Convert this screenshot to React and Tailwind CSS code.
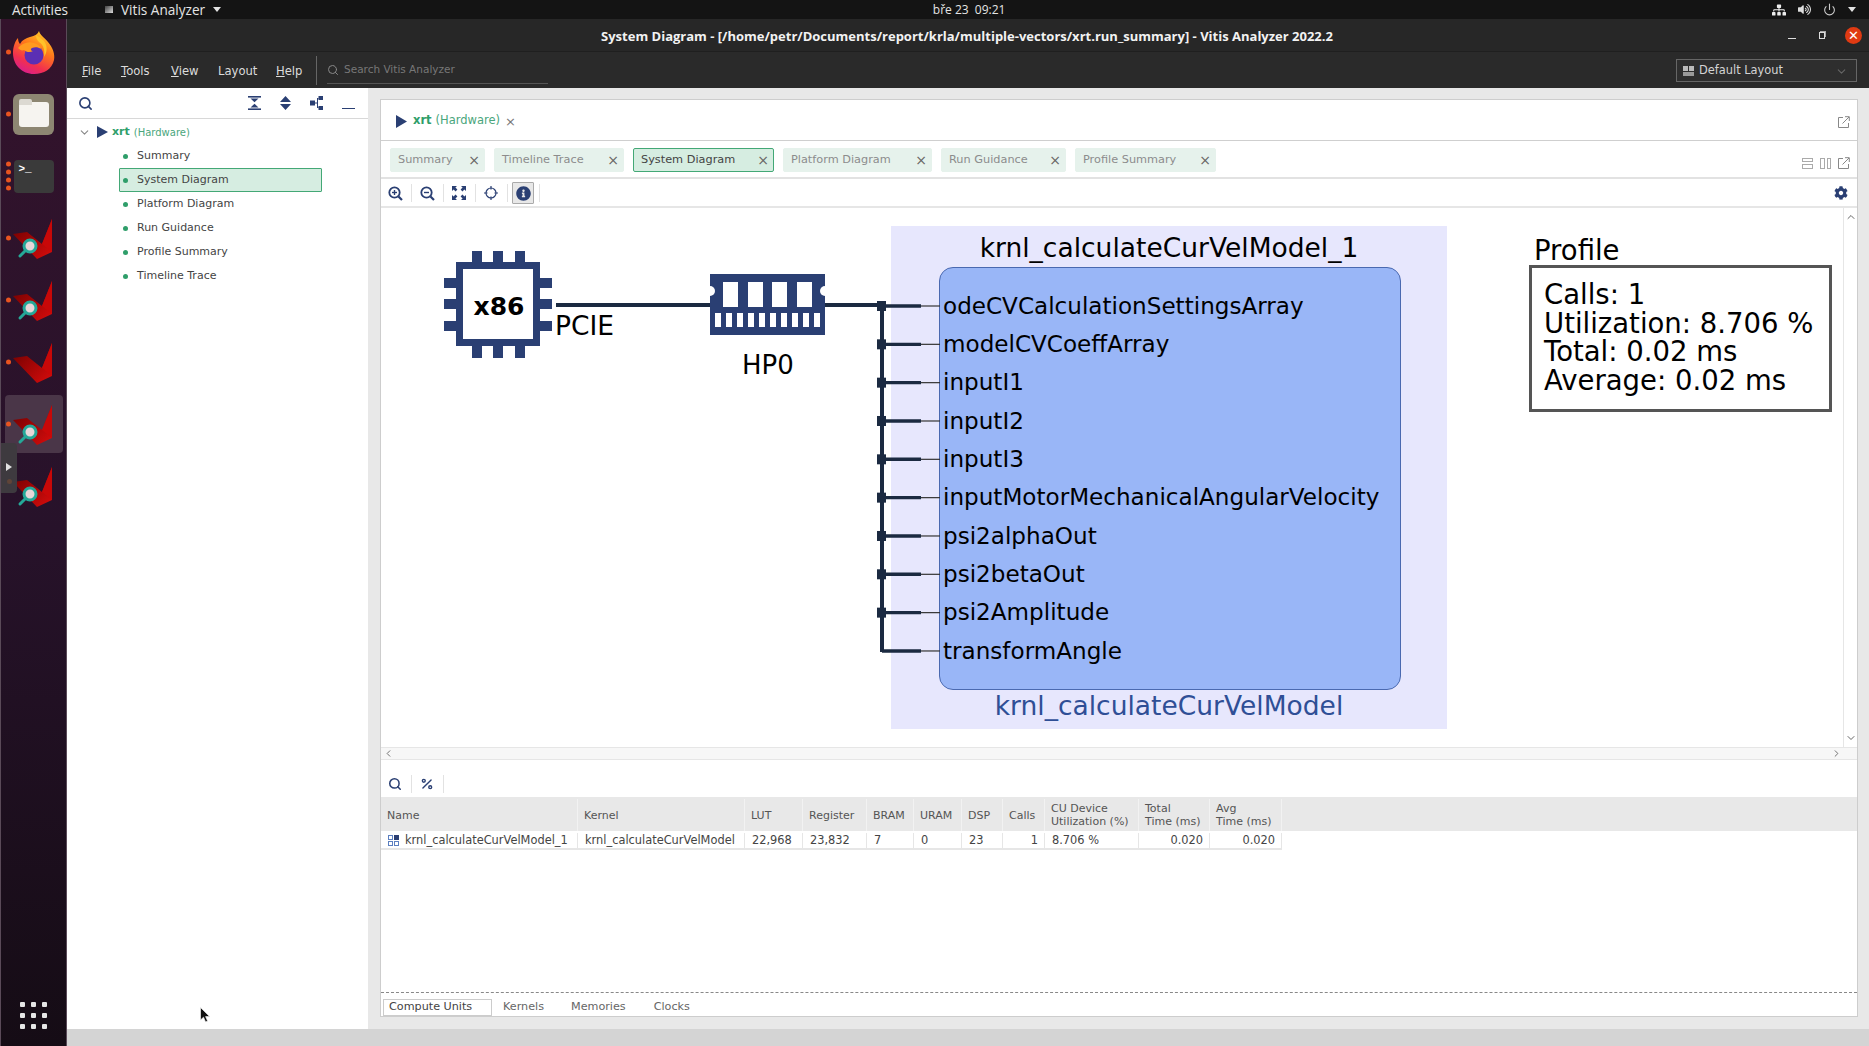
import { ChevronDown, ChevronUp, ChevronLeft, ChevronRight, Search, Power, Percent } from "lucide-react";
import { FaCog, FaInfoCircle, FaSitemap, FaVolumeUp } from "react-icons/fa";

const NAVY = "#2a3f73";

const treeItems = ["Summary", "System Diagram", "Platform Diagram", "Run Guidance", "Profile Summary", "Timeline Trace"];

const tabs = [
  { label: "Summary", w: "w-[95px]" },
  { label: "Timeline Trace", w: "w-[130px]" },
  { label: "System Diagram", w: "w-[141px]", active: true },
  { label: "Platform Diagram", w: "w-[149px]" },
  { label: "Run Guidance", w: "w-[125px]" },
  { label: "Profile Summary", w: "w-[141px]" },
];

const ports = [
  "odeCVCalculationSettingsArray",
  "modelCVCoeffArray",
  "inputI1",
  "inputI2",
  "inputI3",
  "inputMotorMechanicalAngularVelocity",
  "psi2alphaOut",
  "psi2betaOut",
  "psi2Amplitude",
  "transformAngle",
];

const columns = [
  { label: "Name" },
  { label: "Kernel" },
  { label: "LUT" },
  { label: "Register" },
  { label: "BRAM" },
  { label: "URAM" },
  { label: "DSP" },
  { label: "Calls" },
  { label: "CU Device", sub: "Utilization (%)" },
  { label: "Total", sub: "Time (ms)" },
  { label: "Avg", sub: "Time (ms)" },
];

const row = [
  { v: "krnl_calculateCurVelModel_1" },
  { v: "krnl_calculateCurVelModel" },
  { v: "22,968" },
  { v: "23,832" },
  { v: "7" },
  { v: "0" },
  { v: "23" },
  { v: "1", right: true },
  { v: "8.706 %" },
  { v: "0.020", right: true },
  { v: "0.020", right: true },
];

const gridCols = "grid-cols-[197px_167px_58px_64px_47px_48px_41px_42px_94px_71px_72px]";

function Firefox() {
  return (
    <svg width="42" height="43" viewBox="0 0 42 43">
      <defs>
        <linearGradient id="ffA" x1="0.8" y1="0" x2="0.3" y2="1">
          <stop offset="0" stopColor="#ffd02a" />
          <stop offset="0.4" stopColor="#ff7a1a" />
          <stop offset="0.75" stopColor="#f2304e" />
          <stop offset="1" stopColor="#d81e8e" />
        </linearGradient>
      </defs>
      <path d="M26 0c1 4 5 6 9 11 5 6 7 12 6 18-2 9-10 14-20 14C9 43 0 34 0 22 0 16 2 10 5 7c0 3 1 5 2 6 2-4 6-6 10-7 5-1 8-3 9-6z" fill="url(#ffA)" />
      <circle cx="21" cy="24" r="9.5" fill="#5b2fb4" />
      <path d="M5 17c4-5 11-7 16-5 4 1 6 3 7 6-3-2-6-2-9-1-2 1-1 3 1 3-3 2-7 1-9-1-2 1-4 0-6-2z" fill="#ff9a1f" />
      <path d="M26 11c5 3 6 9 5 15 3-4 4-11 0-16-3-3-6-5-8-6 0 3 1 5 3 7z" fill="#ffc22a" />
    </svg>
  );
}

function VitisIcon({ lens = true }) {
  return (
    <svg width="44" height="44" viewBox="0 0 44 44">
      <defs>
        <linearGradient id="vitA" x1="0" y1="0" x2="1" y2="1">
          <stop offset="0" stopColor="#6a0000" />
          <stop offset="1" stopColor="#d80c0c" />
        </linearGradient>
      </defs>
      <path d="M1 18 15 16 30 28 40 3 40 36 25 43Z" fill="url(#vitA)" />
      <path d="M30 28 40 3 40 36Z" fill="#c80808" />
      {lens && (
        <>
          <line x1="8" y1="40" x2="15" y2="33" stroke="#25a898" strokeWidth="3" strokeLinecap="round" />
          <circle cx="18" cy="30" r="6" fill="#e8d6d8" stroke="#25a898" strokeWidth="3" />
        </>
      )}
    </svg>
  );
}

function Dots({ n = 1 }) {
  return (
    <div className="absolute left-[5px] top-1/2 flex -translate-y-1/2 flex-col gap-[3px]">
      {Array.from({ length: n }).map((_, i) => (
        <span key={i} className="block h-[5px] w-[5px] rounded-full bg-[#e95420]" />
      ))}
    </div>
  );
}

function Dock() {
  return (
    <div className="relative flex w-[67px] shrink-0 flex-col border-x border-x-[#5a4a58] bg-gradient-to-b from-[#34132c] via-[#27122a] to-[#150c15] pt-[2px]">
      <div className="relative flex h-[62px] items-center justify-center">
        <Dots />
        <div className="ml-[1px]"><Firefox /></div>
      </div>
      <div className="relative flex h-[62px] items-center justify-center">
        <Dots />
        <div className="flex h-[41px] w-[41px] items-center justify-center rounded-[6px] bg-[#8d8672]">
          <div className="relative h-[25px] w-[30px] rounded-[3px] bg-[#f6f4f0]">
            <div className="absolute -top-[3px] left-0 h-[6px] w-[13px] rounded-t-[2px] bg-[#dcd9d2]" />
          </div>
        </div>
      </div>
      <div className="relative flex h-[62px] items-center justify-center">
        <Dots n={4} />
        <div className="h-[33px] w-[40px] rounded-[4px] bg-[#3a3a3a] px-[5px] pt-[2px] font-['Liberation_Mono',monospace] text-[11px] font-bold leading-[14px] text-white">&gt;_</div>
      </div>
      {[0, 1, 2, 3, 4].map((i) => (
        <div key={i} className="relative flex h-[62px] items-center justify-center">
          {i === 3 && <div className="absolute left-[4px] top-[2px] h-[58px] w-[58px] rounded-[4px] bg-[#4a3648]" />}
          {i !== 4 && <Dots />}
          <div className="relative ml-[1px]"><VitisIcon lens={i !== 2} /></div>
        </div>
      ))}
      {/* handle over the dock */}
      <div className="absolute left-0 top-[424px] flex h-[50px] w-[16px] flex-col items-center rounded-r-[4px] bg-[#3e3a3f] pt-[20px]">
        <span className="block h-0 w-0 border-y-[4px] border-l-[6px] border-y-transparent border-l-[#e0e0e0]" />
        <span className="mt-[8px] block h-[5px] w-[5px] rounded-full bg-[#5f4438]" />
      </div>
      <div className="mb-[17px] mt-auto grid w-[27px] grid-cols-3 gap-[6px] self-center">
        {Array.from({ length: 9 }).map((_, i) => (
          <span key={i} className="block h-[5px] w-[5px] rounded-[1px] bg-[#e6e6e6]" />
        ))}
      </div>
    </div>
  );
}

function TopBar() {
  return (
    <div className="flex h-[19px] shrink-0 items-center bg-[#141414] pl-[12px] font-['Open_Sans',sans-serif] text-[13.6px] leading-[15px] text-[#e4e4e4]">
      <span className="w-[93px]">Activities</span>
      <span className="mr-[8px] h-[7px] w-[8px] bg-gradient-to-br from-[#444] to-[#ddd]" />
      <span>Vitis Analyzer</span>
      <span className="ml-[8px] h-0 w-0 border-x-[4px] border-t-[5px] border-x-transparent border-t-[#e4e4e4]" />
      <span className="ml-[698px] w-[100px] text-center text-[12px]">bře 23&nbsp;&nbsp;09:21</span>
      <div className="ml-auto flex items-center gap-[12px] pr-[13px]">
        <FaSitemap size={14} color="#eee" />
        <FaVolumeUp size={13} color="#ddd" />
        <Power size={13} color="#ccc" />
        <span className="h-0 w-0 border-x-[4px] border-t-[5px] border-x-transparent border-t-[#e4e4e4]" />
      </div>
    </div>
  );
}

function TitleBar() {
  return (
    <div className="relative flex h-[33px] shrink-0 items-center justify-center border-b border-b-[#1f1f1f] bg-[#272727] pt-[3px] font-['Open_Sans',sans-serif] text-[13px] font-bold text-[#f2f2f2]">
      <span className="-ml-[2px]">System Diagram - [/home/petr/Documents/report/krla/multiple-vectors/xrt.run_summary] - Vitis Analyzer 2022.2</span>
      <div className="absolute right-[7px] top-[8px] flex items-center">
        <span className="mt-[6px] h-[1px] w-[8px] bg-[#ddd]" />
        <span className="relative ml-[23px] h-[7px] w-[6px] border border-[#ddd]">
          <span className="absolute -right-[2px] -top-[2px] h-[6px] w-[6px] border-r border-t border-[#aaa]" />
        </span>
        <span className="ml-[20px] flex h-[17px] w-[17px] items-center justify-center rounded-full bg-[#e03a12] text-[13px] font-normal leading-none text-white">✕</span>
      </div>
    </div>
  );
}

function MenuBar() {
  const menus = [
    ["F", "ile", "w-[39px]"],
    ["T", "ools", "w-[50px]"],
    ["V", "iew", "w-[47px]"],
    ["", "Layout", "w-[58px]"],
    ["H", "elp", "w-[40px]"],
  ];
  return (
    <div className="flex h-[36px] shrink-0 items-center bg-[#2a2a2a] pl-[15px] text-[11.6px] text-[#dcdcdc]">
      {menus.map(([u, rest, w]) => (
        <span key={rest} className={`${w} pt-[3px]`}>
          {u && <span className="underline">{u}</span>}
          {rest}
        </span>
      ))}
      <span className="h-[29px] w-[1px] bg-[#666]" />
      <div className="ml-[10px] flex h-[27px] w-[221px] items-center gap-[5px] border-b border-b-[#555] text-[10.5px] text-[#777]">
        <Search size={12} color="#888" />
        <span>Search Vitis Analyzer</span>
      </div>
      <div className="ml-auto mr-[12px] flex h-[23px] w-[181px] items-center border border-[#666] bg-[#2e2e2e] pl-[6px] pr-[8px] pt-[2px] text-[11.4px] text-[#d4d4d4]">
        <span className="mr-[5px] grid h-[10px] w-[11px] grid-cols-2 gap-[1px]">
          <span className="bg-[#bbb]" />
          <span className="bg-[#bbb]" />
          <span className="col-span-2 bg-[#999]" />
        </span>
        Default Layout
        <ChevronDown size={13} color="#666" className="ml-auto" />
      </div>
    </div>
  );
}

function Sep() {
  return <span className="h-[18px] w-[1px] bg-[#e2e2e2]" />;
}

function CollapseIcon() {
  return (
    <svg width="13" height="14" viewBox="0 0 13 14" fill={NAVY}>
      <rect x="0" y="0" width="13" height="1.6" />
      <rect x="0" y="12.4" width="13" height="1.6" />
      <path d="M2.5 2.5h8L6.5 6.3zM2.5 11.5h8L6.5 7.7z" />
    </svg>
  );
}

function ExpandIcon() {
  return (
    <svg width="11" height="14" viewBox="0 0 11 14" fill={NAVY}>
      <path d="M5.5 0 11 6H0zM5.5 14 0 8h11z" />
    </svg>
  );
}

function HierarchyIcon() {
  return (
    <svg width="13" height="14" viewBox="0 0 13 14" fill={NAVY}>
      <rect x="0" y="4.5" width="5" height="5" />
      <rect x="8.5" y="0" width="4.5" height="4" />
      <rect x="8.5" y="10" width="4.5" height="4" />
      <path d="M5 6.5h2V2h1.5v1H8v8h.5v1H7V7.5H5z" />
    </svg>
  );
}

function LeftPanel() {
  return (
    <div className="flex w-[301px] shrink-0 flex-col bg-white">
      <div className="flex h-[31px] shrink-0 items-center border-b border-b-[#d8d8d8] pl-[11px] pr-[13px]">
        <Search size={15} color={NAVY} strokeWidth={2.6} />
        <div className="ml-auto flex items-center">
          <CollapseIcon />
          <span className="ml-[9px] mr-[10px]"><Sep /></span>
          <ExpandIcon />
          <span className="ml-[10px] mr-[9px]"><Sep /></span>
          <HierarchyIcon />
          <span className="ml-[9px] mr-[10px]"><Sep /></span>
          <span className="mt-[11px] h-[1.5px] w-[13px] bg-[#2a3f73]" />
        </div>
      </div>
      <div className="flex h-[25px] items-center pl-[11px] pt-[1px] text-[11px]">
        <ChevronDown size={13} color="#888" />
        <svg width="11" height="12" viewBox="0 0 11 12" className="ml-[6px]"><path d="M0 0 11 6 0 12z" fill={NAVY} /></svg>
        <span className="ml-[4px] font-bold text-[#2f9e6a]">xrt</span>
        <span className="ml-[4px] text-[10px] text-[#4aa67c]">(Hardware)</span>
      </div>
      <div className="flex flex-col pl-[52px]">
        {treeItems.map((t) => (
          <div
            key={t}
            className={
              t === "System Diagram"
                ? "flex h-[24px] w-[203px] items-center rounded-[1px] border border-[#43a876] bg-[#d6ede1] pl-[3px] text-[11px] text-[#444]"
                : "flex h-[24px] w-[203px] items-center border border-transparent pl-[3px] text-[11px] text-[#444]"
            }
          >
            <span className="mr-[9px] h-[5px] w-[5px] rounded-full bg-[#2f9e6a]" />
            {t}
          </div>
        ))}
      </div>
    </div>
  );
}

function PopOut() {
  return (
    <svg width="12" height="12" viewBox="0 0 12 12" fill="none" stroke="#888" strokeWidth="1">
      <path d="M5 1.5H.5v10h10V7" />
      <path d="M4.5 7.5 11 1M7 .7h4.3V5" />
    </svg>
  );
}

function Chip() {
  const pins = [251, 272, 294];
  return (
    <svg width="108" height="107" viewBox="0 0 108 107" className="absolute left-[63px] top-[43px]">
      <rect x="12" y="11" width="84" height="84" fill={NAVY} />
      <rect x="19" y="18" width="70" height="70" fill="#fff" />
      {[28, 49, 71].map((x) => (
        <g key={x} fill={NAVY}>
          <rect x={x} y="0" width="10" height="12" />
          <rect x={x} y="95" width="10" height="12" />
        </g>
      ))}
      {pins.map((p) => (
        <g key={p} fill={NAVY}>
          <rect x="0" y={p - 224} width="12" height="10" />
          <rect x="96" y={p - 224} width="12" height="10" />
        </g>
      ))}
    </svg>
  );
}

function Memory() {
  return (
    <svg width="115" height="61" viewBox="0 0 115 61" className="absolute left-[329px] top-[66px]">
      <rect width="115" height="61" fill={NAVY} />
      {[13, 38, 62, 87].map((x) => (
        <rect key={x} x={x} y="8" width="15" height="25" fill="#fff" />
      ))}
      {[5, 16, 27, 38, 49, 60, 71, 82, 93, 104].map((x) => (
        <rect key={x} x={x} y="39" width="6" height="14" fill="#fff" />
      ))}
      <circle cx="0" cy="17" r="5" fill="#fff" />
      <circle cx="115" cy="17" r="5" fill="#fff" />
    </svg>
  );
}

function Wires() {
  // page coordinates minus canvas origin (381, 208)
  const rows = ports.map((_, i) => 98 + i * 38.33);
  return (
    <svg width="1462" height="538" viewBox="0 0 1462 538" className="absolute left-0 top-0" fill="none">
      <path d="M175 97H338M434 97H501" stroke="#1b2a41" strokeWidth="4" />
      <path d={`M501 97V${rows[9] + 1}`} stroke="#1b2a41" strokeWidth="4" />
      {rows.map((y, i) => (
        <g key={i}>
          <path d={`M501 ${y}H540`} stroke="#1b2a41" strokeWidth="3.4" />
          <path d={`M540 ${y}H559`} stroke="#333" strokeWidth="1.2" />
          {i < 9 && <rect x="496" y={y - 5} width="9" height="10" fill="#1b2a41" />}
        </g>
      ))}
    </svg>
  );
}

function Diagram() {
  return (
    <div className="relative flex-1 overflow-hidden bg-white font-['DejaVu_Sans',sans-serif] text-black">
      {/* kernel group */}
      <div className="absolute left-[510px] top-[18px] flex h-[503px] w-[556px] flex-col items-center bg-[#e7e7fd]">
        <div className="flex h-[41px] shrink-0 items-center pt-[3px] text-[26.5px] leading-none">krnl_calculateCurVelModel_1</div>
        <div className="ml-[2px] flex h-[423px] w-[462px] shrink-0 flex-col rounded-[14px] border border-[#4a69b0] bg-[#99b6f7] pl-[3px] pt-[19px]">
          {ports.map((p) => (
            <div key={p} className="flex h-[38.33px] shrink-0 items-center text-[23.1px] leading-none">{p}</div>
          ))}
        </div>
        <div className="flex h-[32px] shrink-0 items-center text-[26.5px] leading-none text-[#2f4f96]">krnl_calculateCurVelModel</div>
      </div>
      <Wires />
      <Chip />
      <Memory />
      <span className="absolute left-[89px] top-[83px] flex h-[30px] w-[58px] items-center justify-center text-[25px] font-bold leading-none">x86</span>
      <span className="absolute left-[174px] top-[103px] text-[26.5px] leading-[30px]">PCIE</span>
      <span className="absolute left-[361px] top-[142px] w-[50px] text-center text-[26px] leading-[30px]">HP0</span>
      {/* profile box */}
      <span className="absolute left-[1153px] top-[26px] text-[27.5px] leading-[32px]">Profile</span>
      <div className="absolute left-[1148px] top-[57px] h-[147px] w-[303px] border-[3px] border-[#555] bg-white pl-[12px] pt-[12px] text-[27.5px] leading-[28.6px]">
        <div>Calls: 1</div>
        <div className="whitespace-nowrap">Utilization: 8.706 %</div>
        <div>Total: 0.02 ms</div>
        <div>Average: 0.02 ms</div>
      </div>
    </div>
  );
}

function ToolIcon({ children, boxed }) {
  return (
    <div className={boxed ? "flex h-[22px] w-[22px] items-center justify-center rounded-[1px] border border-[#aaa] bg-[#e8e8e8]" : "flex h-[22px] w-[22px] items-center justify-center"}>
      {children}
    </div>
  );
}

function ZoomGlass({ plus }) {
  return (
    <svg width="15" height="15" viewBox="0 0 15 15" fill="none" stroke={NAVY} strokeWidth="1.8">
      <circle cx="6.5" cy="6.5" r="5.2" />
      <path d="M10.5 10.5 14 14" strokeWidth="2.2" />
      <path d="M4 6.5h5" strokeWidth="1.4" />
      {plus && <path d="M6.5 4v5" strokeWidth="1.4" />}
    </svg>
  );
}

function FitIcon() {
  return (
    <svg width="14" height="14" viewBox="0 0 14 14" fill={NAVY}>
      <path d="M0 0h5L3.4 1.6 5.4 3.6 3.6 5.4 1.6 3.4 0 5zM14 0v5L12.4 3.4 10.4 5.4 8.6 3.6 10.6 1.6 9 0zM0 14V9L1.6 10.6 3.6 8.6 5.4 10.4 3.4 12.4 5 14zM14 14H9L10.6 12.4 8.6 10.4 10.4 8.6 12.4 10.6 14 9z" />
    </svg>
  );
}

function TargetIcon() {
  return (
    <svg width="14" height="14" viewBox="0 0 14 14" fill="none" stroke={NAVY} strokeWidth="1.2">
      <circle cx="7" cy="7" r="5" />
      <path d="M7 0v3.5M7 10.5V14M0 7h3.5M10.5 7H14" />
    </svg>
  );
}

function MainCard() {
  return (
    <div className="flex min-w-0 flex-1 flex-col border border-[#cdcdcd] bg-white">
      {/* view header */}
      <div className="flex h-[41px] shrink-0 items-center border-b border-b-[#cfcfcf] pl-[15px] pr-[7px] pt-[2px] text-[11.5px]">
        <svg width="11" height="13" viewBox="0 0 11 13"><path d="M0 0 11 6.5 0 13z" fill={NAVY} /></svg>
        <span className="ml-[6px] font-bold text-[#2f9e6a]">xrt</span>
        <span className="ml-[4px] text-[#4aa67c]">(Hardware)</span>
        <span className="ml-[5px] text-[13px] leading-none text-[#777]">×</span>
        <div className="ml-auto mt-[2px]"><PopOut /></div>
      </div>
      {/* tab strip */}
      <div className="flex h-[38px] shrink-0 items-center gap-[9px] border-b-2 border-b-[#e2e2e2] pl-[9px] pr-[7px] pt-[1px]">
        {tabs.map((t) => (
          <div
            key={t.label}
            className={
              t.active
                ? `flex h-[24px] ${t.w} items-center justify-between rounded-[2px] border border-[#43a876] bg-[#d6ede1] pl-[7px] pr-[4px] text-[11.3px] text-[#444]`
                : `flex h-[24px] ${t.w} items-center justify-between rounded-[2px] border border-[#e6f2ec] bg-[#e6f2ec] pl-[7px] pr-[4px] text-[11.3px] text-[#8c8c8c]`
            }
          >
            <span className="pt-[2px]">{t.label}</span>
            <span className="text-[14px] leading-none text-[#666]">×</span>
          </div>
        ))}
        <div className="ml-auto mt-[7px] flex items-center gap-[7px]">
          <span className="flex h-[11px] w-[11px] flex-col justify-between">
            <span className="h-[4.5px] border border-[#aaa]" />
            <span className="h-[4.5px] border border-[#aaa]" />
          </span>
          <span className="flex h-[11px] w-[11px] justify-between">
            <span className="w-[4.5px] border border-[#aaa]" />
            <span className="w-[4.5px] border border-[#aaa]" />
          </span>
          <PopOut />
        </div>
      </div>
      {/* diagram toolbar */}
      <div className="flex h-[29px] shrink-0 items-center gap-[4.5px] border-b-2 border-b-[#e6e6e6] pl-[3px] pr-[9px] pt-[1px]">
        <ToolIcon><ZoomGlass plus /></ToolIcon>
        <Sep />
        <ToolIcon><ZoomGlass /></ToolIcon>
        <Sep />
        <ToolIcon><FitIcon /></ToolIcon>
        <Sep />
        <ToolIcon><TargetIcon /></ToolIcon>
        <Sep />
        <ToolIcon boxed><FaInfoCircle size={15} color={NAVY} /></ToolIcon>
        <Sep />
        <div className="ml-auto"><FaCog size={14} color={NAVY} /></div>
      </div>
      {/* canvas */}
      <div className="flex h-[539px] shrink-0">
        <Diagram />
        <div className="flex w-[14px] shrink-0 flex-col items-center justify-between border-l border-l-[#e6e6e6] bg-white py-[3px]">
          <ChevronUp size={12} color="#666" />
          <ChevronDown size={12} color="#666" />
        </div>
      </div>
      <div className="flex h-[13px] shrink-0 items-center justify-between border-y border-y-[#e6e6e6] bg-[#f7f7f7] pl-[2px] pr-[15px]">
        <ChevronLeft size={11} color="#666" />
        <ChevronRight size={11} color="#666" />
      </div>
      {/* table toolbar */}
      <div className="flex h-[37px] shrink-0 items-center gap-[4.5px] pl-[3px] pt-[10px]">
        <ToolIcon><Search size={14} color={NAVY} strokeWidth={2.6} /></ToolIcon>
        <Sep />
        <ToolIcon><Percent size={14} color={NAVY} strokeWidth={2.4} /></ToolIcon>
        <Sep />
      </div>
      {/* table */}
      <div className="shrink-0 bg-[#e8e8e8]">
        <div className={`grid h-[34px] ${gridCols} w-fit pt-[2px] text-[11px] leading-[13px] text-[#555]`}>
          {columns.map((c) => (
            <div key={c.label} className="flex flex-col justify-center border-r border-r-[#f2f2f2] pl-[6px]">
              <span>{c.label}</span>
              {c.sub && <span className="whitespace-nowrap">{c.sub}</span>}
            </div>
          ))}
        </div>
      </div>
      <div className={`grid h-[19px] shrink-0 ${gridCols} w-fit border-b-2 border-b-[#e6e6e6] pt-[2px] text-[11.4px] leading-[15px] text-[#444]`}>
        {row.map((c, i) => (
          <div key={i} className={c.right ? "flex items-center justify-end border-r border-r-[#e6e6e6] pr-[6px]" : "flex items-center border-r border-r-[#e6e6e6] pl-[7px]"}>
            {i === 0 && (
              <span className="mr-[6px] grid h-[11px] w-[11px] grid-cols-2 gap-[1px]">
                <span className="border border-[#5b7fc0]" />
                <span className="bg-[#2a3f73]" />
                <span className="border border-[#5b7fc0]" />
                <span className="border border-[#5b7fc0]" />
              </span>
            )}
            {c.v}
          </div>
        ))}
      </div>
      <div className="flex-1" />
      {/* bottom tabs */}
      <div className="flex h-[24px] shrink-0 items-center border-t border-dashed border-t-[#888] pb-[1px] pl-[2px] pt-[6px] text-[11.2px] text-[#666]">
        <span className="flex h-[17px] w-[109px] items-center border border-[#ccc] pl-[5px] text-[#444]">Compute Units</span>
        <span className="ml-[11px]">Kernels</span>
        <span className="ml-[27px]">Memories</span>
        <span className="ml-[28px]">Clocks</span>
      </div>
    </div>
  );
}

function Cursor() {
  return (
    <svg width="11" height="16" viewBox="0 0 11 16" className="absolute left-[133px] top-[988px]">
      <path d="M0.5 0.5V13L3.5 10.2 5.6 15 7.6 14 5.6 9.6H9.6Z" fill="#111" stroke="#eee" strokeWidth="0.7" />
    </svg>
  );
}

export default function App() {
  return (
    <div className="flex h-[1046px] w-[1869px] flex-col overflow-hidden bg-[#e8e8e8] font-['DejaVu_Sans',sans-serif]">
      <TopBar />
      <div className="flex min-h-0 flex-1">
        <Dock />
        <div className="relative flex min-w-0 flex-1 flex-col">
          <TitleBar />
          <MenuBar />
          <div className="flex min-h-0 flex-1">
            <LeftPanel />
            <div className="flex min-w-0 flex-1 pb-[12px] pl-[12px] pr-[11px] pt-[11px]">
              <MainCard />
            </div>
          </div>
          <div className="h-[17px] shrink-0 bg-[#d4d4d4]" />
          <Cursor />
        </div>
      </div>
    </div>
  );
}
